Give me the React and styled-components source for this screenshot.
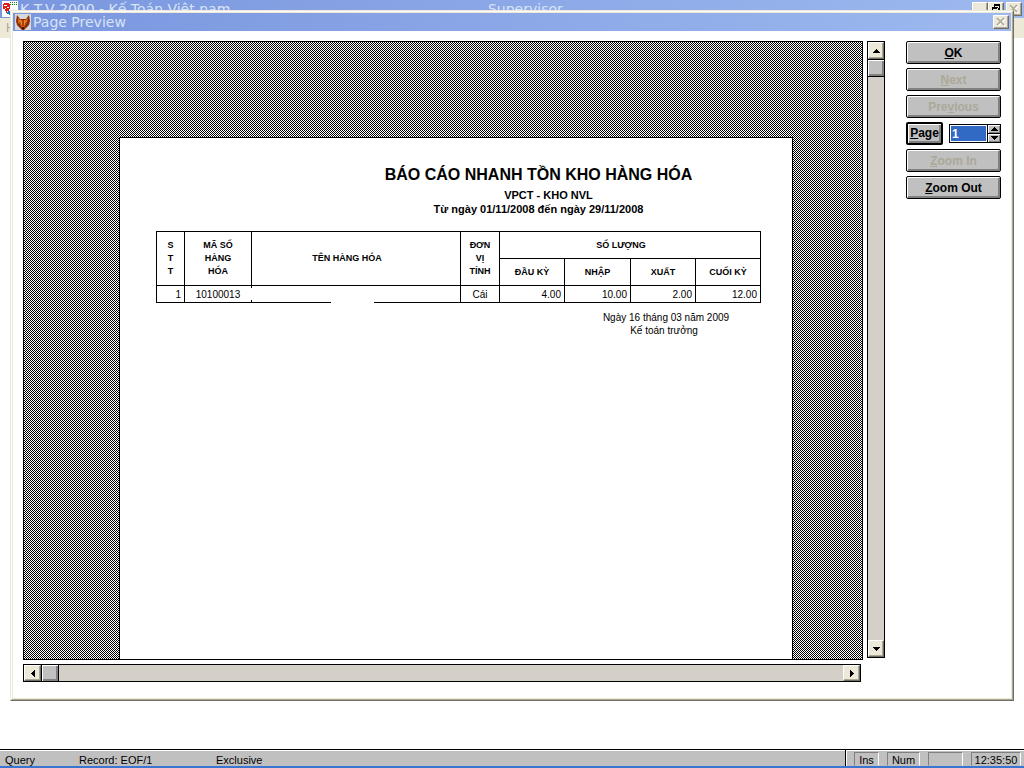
import React from 'react'
import styled, { createGlobalStyle } from 'styled-components'

const GlobalStyle = createGlobalStyle`
  * { box-sizing: border-box; }
  body { margin: 0; background: #fff; }
  button, input { font: inherit; margin: 0; border-radius: 0; }
`

const sans = '"Liberation Sans", Arial, sans-serif'
const caption = '"DejaVu Sans", Verdana, sans-serif'

const Screen = styled.div`
  position: relative;
  display: flex;
  flex-direction: column;
  min-height: 100vh;
  overflow: hidden;
  font-family: ${sans};
  color: #000;
`

const TitleBar = styled.div`
  display: flex;
  align-items: center;
  height: 18px;
  padding: 0 2px;
  background: linear-gradient(90deg, #7a96df, #9db9ef);
  color: #d8e4f8;
  font-family: ${caption};
  font-size: 14px;
  line-height: 20px;
  white-space: nowrap;
`

const TitleIcon = styled.svg`
  width: 16px;
  height: 16px;
  margin-right: 2px;
  flex: none;
`

const TitleText = styled.span`
  flex: ${p => p.$grow || 1};
`

const CaptionButtons = styled.div`
  display: flex;
`

const CaptionButton = styled.button`
  width: 16px;
  height: 14px;
  padding: 0;
  border: 1px solid;
  border-color: #fff #716f64 #716f64 #fff;
  box-shadow: inset -1px -1px #aca899;
  background: #ece9d8;
  svg { display: block; }
  & + &:last-child { margin-left: 2px; }
`

const MenuBar = styled.nav`
  height: 20px;
  padding: 0 6px;
  background: #ece9d8;
  color: #aca899;
  font-size: 12px;
  line-height: 20px;
`

const Desktop = styled.main`
  flex: 1;
`

const StatusBar = styled.footer`
  display: flex;
  height: 19px;
  border-top: 1px solid #000;
  border-bottom: 2px solid #3a76d0;
  box-shadow: inset 0 1px #fff;
  background: #c0c0c0;
  font-size: 11px;
  line-height: 20px;
  white-space: nowrap;
`

const StatusText = styled.span`
  width: ${p => p.$width};
`

const StatusMessage = styled.div`
  display: flex;
  flex: 1;
  padding-left: 5px;
  border-right: 1px solid #000;
`

const Indicators = styled.div`
  display: flex;
  gap: 8px;
  padding: 2px 3px 0 7px;
  border-left: 1px solid #fff;
`

const Indicator = styled.span`
  width: ${p => p.$width};
  border: 1px solid;
  border-color: #808080 #fff #c0c0c0 #808080;
  text-align: center;
  line-height: 14px;
`

const Dialog = styled.section`
  position: absolute;
  inset: 10px 10px 67px;
  display: flex;
  flex-direction: column;
  border: 1px solid;
  border-color: #ece9d8 #716f64 #716f64 #ece9d8;
  background: #fff;
`

const DialogFrame = styled.div`
  display: flex;
  flex-direction: column;
  flex: 1;
  border: 1px solid;
  border-color: #fff #aca899 #aca899 #fff;
`

const DialogInner = styled.div`
  display: flex;
  flex-direction: column;
  flex: 1;
  border: 1px solid #ece9d8;
`

const DialogBody = styled.div`
  display: flex;
  flex: 1;
  padding: 10px 10px 16px;
`

const Viewer = styled.div`
  display: grid;
  flex: 1;
  grid-template-columns: 1fr 18px;
  grid-template-rows: 1fr 18px;
  gap: 4px;
`

const Preview = styled.div`
  display: flex;
  border: 1px solid #000;
  background-image:
    repeating-linear-gradient(90deg, #fff 0 1px, #000 1px 2px),
    repeating-linear-gradient(#fff 0 1px, #000 1px 2px);
  background-size: 2px 2px;
  background-blend-mode: difference;
`

const Paper = styled.article`
  flex: 1;
  margin: 95px 69px 0 95px;
  padding: 26px 31px 0 36px;
  border: 1px solid #000;
  border-bottom: 0;
  background: #fff;
`

const ScrollBar = styled.div`
  display: flex;
  flex-direction: ${p => (p.$vertical ? 'column' : 'row')};
  justify-content: space-between;
  margin: ${p => (p.$vertical ? '0 0 2px' : '0 2px 0 0')};
  border: 1px solid #000;
  background: #d4d0c8;
`

const ScrollStart = styled.div`
  display: flex;
  flex-direction: inherit;
`

const ScrollButton = styled.button`
  display: grid;
  place-items: center;
  width: ${p => (p.$vertical ? '16px' : '17px')};
  height: ${p => (p.$vertical ? '17px' : '16px')};
  padding: 0;
  border: 1px solid;
  border-color: #fff #716f64 #716f64 #fff;
  box-shadow: inset -1px -1px #aca899;
  background: #ece9d8;
`

const Thumb = styled.div`
  width: ${p => (p.$vertical ? '16px' : '18px')};
  height: ${p => (p.$vertical ? '18px' : '16px')};
  border: solid #000;
  border-width: ${p => (p.$vertical ? '1px 0' : '0 1px')};
  box-shadow: inset 1px 1px #fff, inset -2px -2px #808080;
  background: #c0c0c0;
`

const ReportHead = styled.header`
  padding-left: 160px;
  margin-bottom: 14px;
  text-align: center;
`

const ReportTitle = styled.h1`
  margin: 0 0 3px;
  font-size: 16px;
  line-height: 21px;
  white-space: nowrap;
`

const Warehouse = styled.p`
  margin: 0;
  padding-left: 20px;
  font-size: 11px;
  font-weight: bold;
  line-height: 14px;
`

const Period = styled.p`
  margin: 0;
  font-size: 11px;
  font-weight: bold;
  line-height: 15px;
`

const Report = styled.table`
  width: 100%;
  table-layout: fixed;
  border-collapse: collapse;
  font-size: 10px;
  line-height: 13px;
  th, td {
    padding: 0;
    border: 1px solid #000;
  }
  th {
    height: 27px;
    font-size: 9px;
  }
  td { height: 17px; }
`

const Col = styled.col`
  width: ${p => p.$width};
`

const WideHead = styled.th`
  && { padding-right: 18px; }
`

const Cell = styled.td`
  text-align: ${p => p.$align || 'right'};
  && { padding-right: ${p => (p.$align ? 0 : '3px')}; }
`

// the name is blanked out, together with bits of the rules round it
const BlankCell = styled.td`
  position: relative;
  &::before, &::after {
    content: '';
    position: absolute;
    background: #fff;
  }
  &::before {
    left: -1px;
    top: 2px;
    width: 2px;
    height: 12px;
  }
  &::after {
    left: 79px;
    bottom: -1px;
    width: 43px;
    height: 2px;
  }
`

const Signature = styled.footer`
  width: 190px;
  margin: 8px 0 0 auto;
  font-size: 10px;
  line-height: 13px;
  text-align: center;
  p { margin: 0; }
  p + p { padding-right: 4px; }
`

const Controls = styled.div`
  display: flex;
  flex-direction: column;
  gap: 4px;
  width: 95px;
  margin-left: 21px;
  font-size: 12px;
  font-weight: bold;
`

const ControlRow = styled.div`
  display: flex;
  align-items: center;
  justify-content: space-between;
`

const Button = styled.button`
  width: ${p => (p.$compact ? '37px' : '100%')};
  height: 23px;
  padding: ${p => (p.$compact ? 0 : '1px 0 0')};
  border: ${p => (p.$compact ? '2px' : '1px')} solid #000;
  border-radius: 2px;
  box-shadow: inset 1px 1px #fff, inset -2px -2px #808080;
  background: #c0c0c0;
  color: #000;
  line-height: 19px;
  &:disabled { color: #aca899; }
`

const Spinner = styled.div`
  display: flex;
  width: 52px;
  height: 19px;
  border: 1px solid #000;
`

const PageInput = styled.input`
  flex: 1;
  min-width: 0;
  padding: 0 1px;
  border: 1px solid #fff;
  outline: 0;
  background: #316ac5;
  color: #fff;
`

const SpinButtons = styled.div`
  display: grid;
  grid-template-rows: 1fr 1fr;
  gap: 1px;
  width: 13px;
  border-left: 1px solid #000;
  background: #000;
`

const SpinButton = styled.button`
  display: grid;
  place-items: center;
  padding: 0;
  border: 0;
  box-shadow: inset 1px 1px #fff, inset -1px -1px #808080;
  background: #c0c0c0;
`

const arrows = {
  up: 'M3 0h1v1h1v1h1v1h1v1H0V3h1V2h1V1h1z',
  down: 'M0 0h7v1H6v1H5v1H4v1H3V3H2V2H1V1H0z',
  left: 'M4 0v7H3V6H2V5H1V4H0V3h1V2h1V1h1V0z',
  right: 'M0 0h1v1h1v1h1v1h1v1H3v1H2v1H1v1H0z',
}

const Arrow = ({ to }) => {
  const flat = to === 'up' || to === 'down'
  return (
    <svg width={flat ? 7 : 4} height={flat ? 4 : 7} shapeRendering="crispEdges" aria-hidden="true">
      <path d={arrows[to]} />
    </svg>
  )
}

const CloseGlyph = () => (
  <svg width="14" height="12" fill="none" strokeWidth="1.6" aria-hidden="true">
    <path d="M4 3l7 7M11 3l-7 7" stroke="#fff" />
    <path d="M3 2l7 7M10 2l-7 7" stroke="#aca899" />
  </svg>
)

const RestoreGlyph = () => (
  <svg width="14" height="12" shapeRendering="crispEdges" aria-hidden="true">
    <path d="M5 1h6v6H8V5h2V3H6v1H5zM3 4h6v6H3zM4 6v3h4V6z" fillRule="evenodd" />
  </svg>
)

const AppIcon = () => (
  <TitleIcon viewBox="0 0 16 16" shapeRendering="crispEdges" aria-hidden="true">
    <path fill="#fff" d="M0 0h16v16H0z" />
    <path fill="#e01818" d="M1 3h1V2h5v1h1v5H7v2H5v2H4v-2H3V8H1z" />
    <path fill="#fff" d="M2 4h3v1H2zM5 6h2v1H5zM3 7h1v1H3z" />
    <path fill="#108010" d="M8 1h1v1H8zM10 1h1v1h-1zM12 1h1v1h-1zM14 1h1v1h-1zM8 3h1v1H8zM10 3h1v1h-1zM12 3h1v1h-1zM14 3h1v1h-1z" />
    <path fill="#1878d0" d="M6 10h2v1h1v3H7v-1H5v-2h1z" />
  </TitleIcon>
)

const FoxIcon = () => (
  <TitleIcon viewBox="0 0 16 16" aria-hidden="true">
    <path fill="#d8d8d8" d="M0 0h16v16H0z" />
    <path fill="#8a2a08" d="M2 1l3 4h6l3-4 1 6-1 4-3 3-2 2H7l-2-2-3-3-1-4z" />
    <path fill="#e06010" d="M3 4l3 2h4l3-2-1 5-2 2-1 3H7l-1-3-3-2z" />
    <path fill="#f09030" d="M5 6l2 2v3l-3-2zM10 6l-1 2v3l3-2z" />
    <path fill="#b03c08" d="M7 6h2v6H7z" />
    <path fill="#401008" d="M4 8l2 1-1 1zM12 8l-2 1 1 1zM7 13h2v2H7z" />
  </TitleIcon>
)

const quantities = ['ĐẦU KỲ', 'NHẬP', 'XUẤT', 'CUỐI KỲ']
const widths = ['28px', '67px', 'auto', '39px', '65px', '66px', '65px', '65px']

const ReportPage = () => (
  <Paper>
    <ReportHead>
      <ReportTitle>BÁO CÁO NHANH TỒN KHO HÀNG HÓA</ReportTitle>
      <Warehouse>VPCT - KHO NVL</Warehouse>
      <Period>Từ ngày 01/11/2008 đến ngày 29/11/2008</Period>
    </ReportHead>
    <Report>
      <colgroup>
        {widths.map((w, i) => <Col key={i} $width={w} />)}
      </colgroup>
      <thead>
        <tr>
          <th rowSpan="2">S<br />T<br />T</th>
          <th rowSpan="2">MÃ SỐ<br />HÀNG<br />HÓA</th>
          <WideHead rowSpan="2">TÊN HÀNG HÓA</WideHead>
          <th rowSpan="2">ĐƠN<br />VỊ<br />TÍNH</th>
          <WideHead colSpan="4">SỐ LƯỢNG</WideHead>
        </tr>
        <tr>
          {quantities.map(q => <th key={q}>{q}</th>)}
        </tr>
      </thead>
      <tbody>
        <tr>
          <Cell>1</Cell>
          <Cell $align="center">10100013</Cell>
          <BlankCell />
          <Cell $align="center">Cái</Cell>
          <Cell>4.00</Cell>
          <Cell>10.00</Cell>
          <Cell>2.00</Cell>
          <Cell>12.00</Cell>
        </tr>
      </tbody>
    </Report>
    <Signature>
      <p>Ngày 16 tháng 03 năm 2009</p>
      <p>Kế toán trưởng</p>
    </Signature>
  </Paper>
)

const PreviewDialog = () => (
  <Dialog role="dialog" aria-labelledby="preview-title">
    <DialogFrame>
      <DialogInner>
        <TitleBar>
          <FoxIcon />
          <TitleText id="preview-title">Page Preview</TitleText>
          <CaptionButton aria-label="Close"><CloseGlyph /></CaptionButton>
        </TitleBar>
        <DialogBody>
          <Viewer>
            <Preview><ReportPage /></Preview>
            <ScrollBar $vertical>
              <ScrollStart>
                <ScrollButton $vertical aria-label="Scroll up"><Arrow to="up" /></ScrollButton>
                <Thumb $vertical />
              </ScrollStart>
              <ScrollButton $vertical aria-label="Scroll down"><Arrow to="down" /></ScrollButton>
            </ScrollBar>
            <ScrollBar>
              <ScrollStart>
                <ScrollButton aria-label="Scroll left"><Arrow to="left" /></ScrollButton>
                <Thumb />
              </ScrollStart>
              <ScrollButton aria-label="Scroll right"><Arrow to="right" /></ScrollButton>
            </ScrollBar>
          </Viewer>
          <Controls>
            <Button><u>O</u>K</Button>
            <Button disabled><u>N</u>ext</Button>
            <Button disabled>Pre<u>v</u>ious</Button>
            <ControlRow>
              <Button $compact id="go-page"><u>P</u>age</Button>
              <Spinner>
                <PageInput aria-labelledby="go-page" defaultValue="1" />
                <SpinButtons>
                  <SpinButton aria-label="Page up"><Arrow to="up" /></SpinButton>
                  <SpinButton aria-label="Page down"><Arrow to="down" /></SpinButton>
                </SpinButtons>
              </Spinner>
            </ControlRow>
            <Button disabled><u>Z</u>oom In</Button>
            <Button><u>Z</u>oom Out</Button>
          </Controls>
        </DialogBody>
      </DialogInner>
    </DialogFrame>
  </Dialog>
)

const App = () => (
  <Screen>
    <GlobalStyle />
    <TitleBar>
      <AppIcon />
      <TitleText $grow={29}>K.T.V 2000 - Kế Toán Việt nam</TitleText>
      <TitleText $grow={30}>Supervisor</TitleText>
      <CaptionButtons>
        <CaptionButton aria-label="Minimize" />
        <CaptionButton aria-label="Restore"><RestoreGlyph /></CaptionButton>
        <CaptionButton aria-label="Close"><CloseGlyph /></CaptionButton>
      </CaptionButtons>
    </TitleBar>
    <MenuBar>H</MenuBar>
    <Desktop />
    <StatusBar>
      <StatusMessage>
        <StatusText $width="74px">Query</StatusText>
        <StatusText $width="137px">Record: EOF/1</StatusText>
        <StatusText>Exclusive</StatusText>
      </StatusMessage>
      <Indicators>
        <Indicator $width="25px">Ins</Indicator>
        <Indicator $width="33px">Num</Indicator>
        <Indicator $width="35px" />
        <Indicator $width="50px">12:35:50</Indicator>
      </Indicators>
    </StatusBar>
    <PreviewDialog />
  </Screen>
)

export default App
